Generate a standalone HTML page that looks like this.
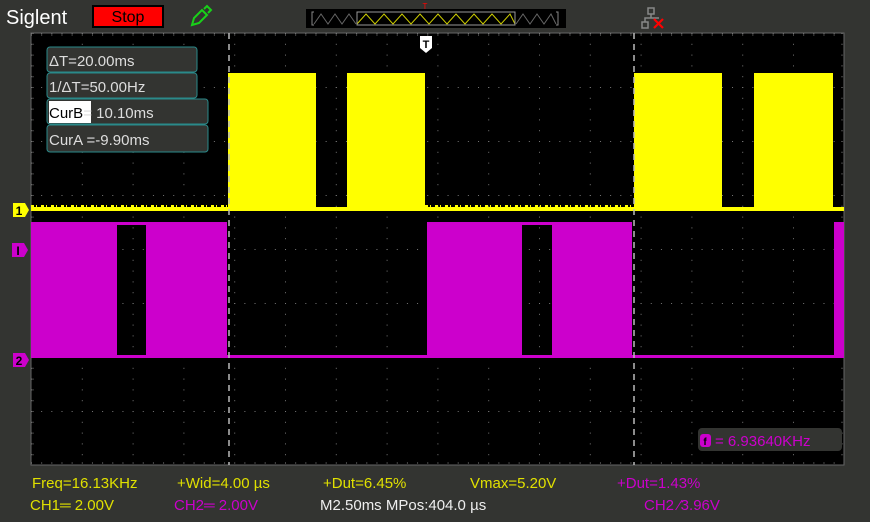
<!DOCTYPE html>
<html><head><meta charset="utf-8"><style>
html,body{margin:0;padding:0;background:#333431;width:870px;height:522px;overflow:hidden}
svg text{font-family:"Liberation Sans",sans-serif}
</style></head><body>
<svg width="870" height="522" viewBox="0 0 870 522" xmlns="http://www.w3.org/2000/svg">
<rect width="870" height="522" fill="#333431"/>
<text x="6" y="24" font-size="20" fill="#fff">Siglent</text>
<rect x="92" y="5" width="72" height="23" fill="#000"/>
<rect x="94" y="7" width="68" height="19" fill="#f00"/>
<text x="128" y="22" font-size="16" fill="#000" text-anchor="middle">Stop</text>
<g transform="translate(190,5)" fill="none" stroke="#19d119" stroke-width="2">
<path d="M2 20 L4 13 L12 5 L17 10 L9 18 Z"/><path d="M14 4 L17 1 L21 5 L18 8"/>
</g>
<rect x="306" y="9" width="260" height="19" fill="#000"/>
<polyline points="314,24 321,14 328,24 335,14 342,24 349,14 356,24" fill="none" stroke="#666" stroke-width="1"/>
<polyline points="357,24 366,14 375,24 384,14 393,24 402,14 411,24 420,14 429,24 438,14 447,24 456,14 465,24 474,14 483,24 492,14 501,24 510,14 515,24" fill="none" stroke="#cc0" stroke-width="1"/>
<rect x="357" y="12" width="158" height="13" fill="none" stroke="#999" stroke-width="1"/>
<polyline points="516,24 523,14 530,24 537,14 544,24 551,14 556,24" fill="none" stroke="#666" stroke-width="1"/>
<path d="M314 12 h-2 v13 h2 M556 12 h2 v13 h-2" fill="none" stroke="#888"/>
<text x="425" y="9" font-size="8" fill="#f00" text-anchor="middle">T</text>
<g fill="none" stroke="#888" stroke-width="1.5"><rect x="648" y="8" width="6" height="6"/><rect x="642" y="22" width="6" height="6"/><path d="M651 14 v4 h-6 v4 M651 18 h8"/></g>
<path d="M654 19 l9 9 M663 19 l-9 9" stroke="#f00" stroke-width="2.2"/>
<rect x="31" y="33" width="813" height="432" fill="#000"/>
<rect x="31" y="33" width="813" height="432" fill="none" stroke="#666" stroke-width="1"/>
<defs>
<pattern id="dv" x="31" y="33" width="50.8" height="10.8" patternUnits="userSpaceOnUse"><rect x="0" y="0" width="1" height="1" fill="#777"/></pattern>
<pattern id="dh" x="31" y="33" width="10.16" height="54" patternUnits="userSpaceOnUse"><rect x="0" y="0" width="1" height="1" fill="#777"/></pattern>
</defs>
<rect x="31" y="33" width="813" height="432" fill="url(#dv)"/>
<rect x="31" y="33" width="813" height="432" fill="url(#dh)"/>
<g stroke="#888" stroke-width="1">
<path d="M31 35 H844" stroke-dasharray="1 9.16"/>
<path d="M31 463 H844" stroke-dasharray="1 9.16"/>
<path d="M842 33 V465" stroke-dasharray="1 9.8"/>
<path d="M33 33 V465" stroke-dasharray="1 9.8"/>
</g>
<g fill="#ffff00">
<rect x="31" y="207" width="813" height="4"/>
<rect x="228" y="73" width="88" height="137"/>
<rect x="347" y="73" width="78" height="137"/>
<rect x="634" y="73" width="88" height="137"/>
<rect x="754" y="73" width="79" height="137"/>
</g>
<path d="M31 206 H228 M425 206 H634" stroke="#ffff00" stroke-width="2" stroke-dasharray="3 2 1 4"/>
<g fill="#cc00cc">
<rect x="31" y="355" width="813" height="3"/>
<rect x="31" y="222" width="86" height="136"/>
<rect x="117" y="222" width="29" height="3"/>
<rect x="146" y="222" width="81" height="136"/>
<rect x="427" y="222" width="95" height="136"/>
<rect x="522" y="222" width="30" height="3"/>
<rect x="552" y="222" width="80" height="136"/>
<rect x="834" y="222" width="10" height="136"/>
</g>
<path d="M229 33 V465 M634 33 V465" stroke="#bbb" stroke-width="1.5" stroke-dasharray="6 5"/>
<path d="M420 36 h12 v12 l-6 5 l-6 -5 Z" fill="#fff"/>
<text x="426" y="48" font-size="11" fill="#000" text-anchor="middle" font-weight="bold">T</text>
<path d="M13 203 h12 l4 7 l-4 7 h-12 Z" fill="#ffff00"/><text x="19" y="215" font-size="12" fill="#000" text-anchor="middle" font-weight="bold">1</text>
<path d="M12 243 h12 l4 7 l-4 7 h-12 Z" fill="#cc00cc"/><text x="18" y="255" font-size="12" fill="#000" text-anchor="middle" font-weight="bold">I</text>
<path d="M13 353 h12 l4 7 l-4 7 h-12 Z" fill="#cc00cc"/><text x="19" y="365" font-size="12" fill="#000" text-anchor="middle" font-weight="bold">2</text>
<g fill="#333431" stroke="#2a8a8a" stroke-width="1">
<rect x="47" y="47" width="150" height="25" rx="3"/>
<rect x="47" y="73" width="150" height="25" rx="3"/>
<rect x="47" y="99" width="161" height="25" rx="3"/>
<rect x="47" y="125" width="161" height="27" rx="3"/>
</g>
<rect x="49" y="101" width="42" height="22" fill="#fff"/>
<g font-size="15" fill="#ddd">
<text x="49" y="66">ΔT=20.00ms</text>
<text x="49" y="92">1/ΔT=50.00Hz</text>
<text x="49" y="118"><tspan fill="#000">CurB</tspan>= 10.10ms</text>
<text x="49" y="145">CurA =-9.90ms</text>
</g>
<rect x="698" y="428" width="144" height="23" rx="4" fill="#333431"/>
<rect x="700" y="434" width="11" height="13" rx="3" fill="#cc00cc"/>
<text x="705" y="445" font-size="10" fill="#000" text-anchor="middle" font-weight="bold">f</text>
<text x="715" y="446" font-size="15" fill="#cc00cc">= 6.93640KHz</text>
<g font-size="15">
<text x="32" y="488" fill="#e0e000">Freq=16.13KHz</text>
<text x="177" y="488" fill="#e0e000">+Wid=4.00 µs</text>
<text x="323" y="488" fill="#e0e000">+Dut=6.45%</text>
<text x="470" y="488" fill="#e0e000">Vmax=5.20V</text>
<text x="617" y="488" fill="#cc00cc">+Dut=1.43%</text>
<text x="30" y="510" fill="#e0e000">CH1═ 2.00V</text>
<text x="174" y="510" fill="#cc00cc">CH2═ 2.00V</text>
<text x="320" y="510" fill="#eee">M2.50ms  MPos:404.0 µs</text>
<text x="644" y="510" fill="#cc00cc">CH2  ⁄3.96V</text>
</g>
</svg>
</body></html>
